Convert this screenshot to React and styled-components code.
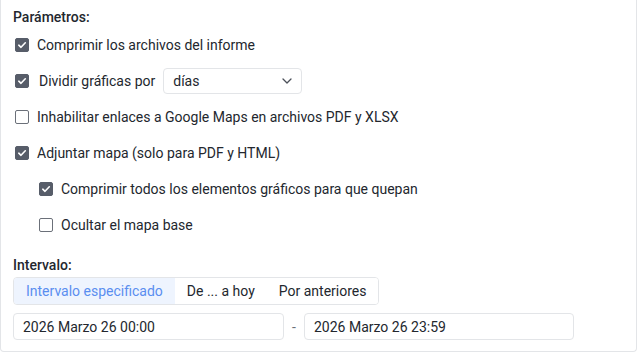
import React from 'react';
import styled, { createGlobalStyle } from 'styled-components';

const GlobalStyle = createGlobalStyle`
  body {
    margin: 0;
    background: #ffffff;
    font-family: Roboto, "Liberation Sans", sans-serif;
    color: #23272e;
  }
`;

const Panel = styled.div`
  box-sizing: border-box;
  width: 637px;
  height: 352px;
  border: 1px solid #e3e5e8;
  border-top: none;
  border-radius: 0 0 4px 4px;
  padding: 8px 12px 11px 12px;
  display: flex;
  flex-direction: column;
  font-size: 14px;
`;

const Heading = styled.div`
  font-weight: 500;
  line-height: 18px;
  margin-top: ${(p) => p.$top || 0}px;
`;

const Options = styled.div`
  display: flex;
  flex-direction: column;
  gap: 10px;
  margin-top: 6px;
`;

const Row = styled.label`
  display: flex;
  align-items: center;
  height: 26px;
  padding-left: ${(p) => (p.$nested ? 26 : 2)}px;
  gap: ${(p) => p.$gap || 8}px;
  cursor: pointer;
`;

const Box = styled.span`
  box-sizing: border-box;
  width: 14px;
  height: 14px;
  border-radius: 2px;
  flex-shrink: 0;
  display: flex;
  align-items: center;
  justify-content: center;
  background: ${(p) => (p.$checked ? '#575d69' : '#ffffff')};
  border: 1px solid ${(p) => (p.$checked ? '#575d69' : '#6b7079')};
`;

const Select = styled.div`
  box-sizing: border-box;
  width: 139px;
  height: 26px;
  margin-left: -2px;
  border: 1px solid #e3e5e8;
  border-radius: 4px;
  padding: 0 9px;
  display: flex;
  align-items: center;
  justify-content: space-between;
`;

const Tabs = styled.div`
  display: flex;
  align-self: flex-start;
  margin-top: 3px;
  height: 27px;
  border: 1px solid #e3e5e8;
  border-radius: 4px;
  overflow: hidden;
`;

const Tab = styled.div`
  display: flex;
  align-items: center;
  padding: 0 12px;
  background: ${(p) => (p.$active ? '#eef4fe' : '#ffffff')};
  color: ${(p) => (p.$active ? '#5a8ef0' : '#23272e')};
`;

const Range = styled.div`
  display: flex;
  align-items: center;
  gap: 8px;
  margin-top: 8px;
`;

const Field = styled.div`
  box-sizing: border-box;
  width: ${(p) => p.$w}px;
  height: 27px;
  border: 1px solid #e3e5e8;
  border-radius: 4px;
  padding: 0 9px;
  display: flex;
  align-items: center;
`;

const Dash = styled.span`
  color: #6b7079;
  width: 4px;
`;

function Check({ checked }) {
  return (
    <Box $checked={checked}>
      {checked && (
        <svg width="10" height="10" viewBox="0 0 10 10">
          <path d="M1.8 5.2 L4 7.3 L8.3 2.8" fill="none" stroke="#fff" strokeWidth="1.6" strokeLinecap="round" strokeLinejoin="round" />
        </svg>
      )}
    </Box>
  );
}

export default function App() {
  return (
    <>
      <GlobalStyle />
      <Panel>
        <Heading>Parámetros:</Heading>
        <Options>
          <Row>
            <Check checked />
            Comprimir los archivos del informe
          </Row>
          <Row $gap={10}>
            <Check checked />
            Dividir gráficas por
            <Select>
              días
              <svg width="10" height="6" viewBox="0 0 10 6">
                <path d="M1 1 L5 5 L9 1" fill="none" stroke="#4b5059" strokeWidth="1.3" strokeLinecap="round" strokeLinejoin="round" />
              </svg>
            </Select>
          </Row>
          <Row>
            <Check />
            Inhabilitar enlaces a Google Maps en archivos PDF y XLSX
          </Row>
          <Row>
            <Check checked />
            Adjuntar mapa (solo para PDF y HTML)
          </Row>
          <Row $nested>
            <Check checked />
            Comprimir todos los elementos gráficos para que quepan
          </Row>
          <Row $nested>
            <Check />
            Ocultar el mapa base
          </Row>
        </Options>
        <Heading $top={18}>Intervalo:</Heading>
        <Tabs>
          <Tab $active>Intervalo especificado</Tab>
          <Tab>De ... a hoy</Tab>
          <Tab>Por anteriores</Tab>
        </Tabs>
        <Range>
          <Field $w={271}>2026 Marzo 26 00:00</Field>
          <Dash>-</Dash>
          <Field $w={270}>2026 Marzo 26 23:59</Field>
        </Range>
      </Panel>
    </>
  );
}
